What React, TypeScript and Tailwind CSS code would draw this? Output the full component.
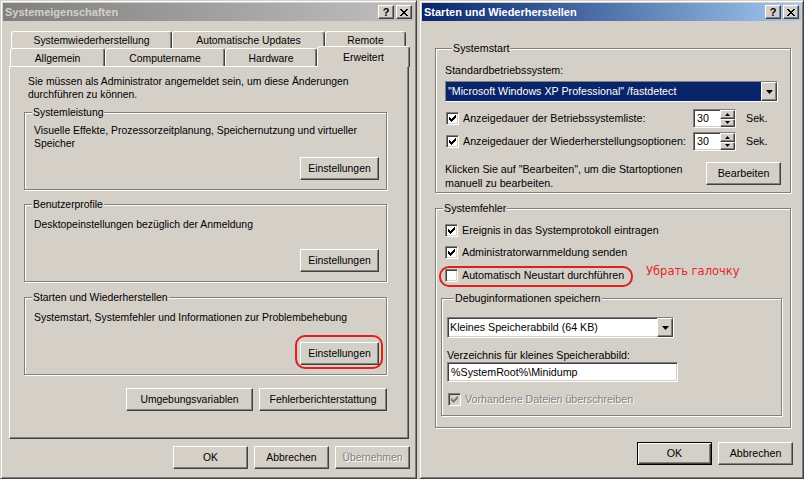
import type { ReactNode } from "react"

// classic 3D edges
const raised =
  "border border-t-white border-l-white border-r-[#404040] border-b-[#404040] shadow-[inset_-1px_-1px_0_#808080]"
const defRaised =
  "border border-black shadow-[inset_1px_1px_0_#fff,inset_-1px_-1px_0_#404040,inset_-2px_-2px_0_#808080]"
const sunken =
  "border border-t-[#808080] border-l-[#808080] border-r-white border-b-white shadow-[inset_1px_1px_0_#404040,inset_-1px_-1px_0_#d4d0c8]"
const etched = "border border-[#808080] shadow-[inset_1px_1px_0_#fff,1px_1px_0_#fff]"
const frame =
  "border border-t-[#d4d0c8] border-l-[#d4d0c8] border-r-[#404040] border-b-[#404040] shadow-[inset_1px_1px_0_#fff,inset_-1px_-1px_0_#808080] p-[2px]"
const grayed = "text-[#808080] [text-shadow:1px_1px_0_#fff]"

const CloseGlyph = () => (
  <svg width="8" height="7" viewBox="0 0 8 7" shapeRendering="crispEdges" fill="#000">
    <rect x="0" y="0" width="2" height="1" />
    <rect x="6" y="0" width="2" height="1" />
    <rect x="1" y="1" width="2" height="1" />
    <rect x="5" y="1" width="2" height="1" />
    <rect x="2" y="2" width="4" height="1" />
    <rect x="3" y="3" width="2" height="1" />
    <rect x="2" y="4" width="4" height="1" />
    <rect x="1" y="5" width="2" height="1" />
    <rect x="5" y="5" width="2" height="1" />
    <rect x="0" y="6" width="2" height="1" />
    <rect x="6" y="6" width="2" height="1" />
  </svg>
)

const TitleButton = ({ children }: { children: ReactNode }) => (
  <div
    className={`w-[16px] h-[14px] flex items-center justify-center bg-[#d4d0c8] text-black font-bold text-[11px] ${raised}`}
  >
    {children}
  </div>
)

const TitleBar = ({ title, active }: { title: string; active?: boolean }) => (
  <div
    className={`h-[18px] shrink-0 flex items-center px-[2px] text-[11px] ${
      active
        ? "bg-linear-to-r from-[#0a246a] to-[#a6caf0] text-white"
        : "bg-linear-to-r from-[#808080] to-[#c0c0c0] text-[#d4d0c8]"
    }`}
  >
    <span className="font-bold">{title}</span>
    <div className="ml-auto flex gap-[2px]">
      <TitleButton>?</TitleButton>
      <TitleButton>
        <CloseGlyph />
      </TitleButton>
    </div>
  </div>
)

const Btn = ({
  label,
  w = "w-[75px]",
  def,
  disabled,
}: {
  label: string
  w?: string
  def?: boolean
  disabled?: boolean
}) => (
  <div
    className={`${w} h-[23px] shrink-0 flex items-center justify-center bg-[#d4d0c8] ${def ? defRaised : raised} ${
      disabled ? grayed : ""
    }`}
  >
    {label}
  </div>
)

const CheckGlyph = ({ color }: { color: string }) => (
  <svg width="7" height="7" viewBox="0 0 7 7" shapeRendering="crispEdges" fill={color}>
    <rect x="0" y="2" width="1" height="3" />
    <rect x="1" y="3" width="1" height="3" />
    <rect x="2" y="4" width="1" height="3" />
    <rect x="3" y="3" width="1" height="3" />
    <rect x="4" y="2" width="1" height="3" />
    <rect x="5" y="1" width="1" height="3" />
    <rect x="6" y="0" width="1" height="3" />
  </svg>
)

const Check = ({ checked, disabled }: { checked?: boolean; disabled?: boolean }) => (
  <div
    className={`w-[13px] h-[13px] shrink-0 flex items-center justify-center ${sunken} ${
      disabled ? "bg-[#d4d0c8]" : "bg-white"
    }`}
  >
    {checked && <CheckGlyph color={disabled ? "#808080" : "#000"} />}
  </div>
)

const CheckRow = ({ label, checked }: { label: string; checked?: boolean }) => (
  <div className="flex items-center h-[13px] gap-[4px]">
    <Check checked={checked} />
    <span>{label}</span>
  </div>
)

const DropButton = () => (
  <div className={`w-[16px] h-full shrink-0 flex items-center justify-center bg-[#d4d0c8] ${raised}`}>
    <svg width="7" height="4" viewBox="0 0 7 4" fill="#000">
      <path d="M0 0h7L3.5 4z" />
    </svg>
  </div>
)

const SpinArrow = ({ up }: { up?: boolean }) => (
  <div className={`flex-1 flex items-center justify-center bg-[#d4d0c8] ${raised}`}>
    <svg width="5" height="3" viewBox="0 0 5 3" fill="#000">
      <path d={up ? "M0 3h5L2.5 0z" : "M0 0h5L2.5 3z"} />
    </svg>
  </div>
)

const Spin = () => (
  <div className={`w-[43px] h-[19px] shrink-0 flex bg-white ${sunken}`}>
    <span className="flex-1 pl-[3px] self-center">30</span>
    <div className="w-[15px] flex flex-col">
      <SpinArrow up />
      <SpinArrow />
    </div>
  </div>
)

const Group = ({ label, className, children }: { label: string; className: string; children?: ReactNode }) => (
  <div className={`flex flex-col shrink-0 ${etched} ${className}`}>
    <div className="-mt-[7px] ml-[7px] self-start px-[1px] bg-[#d4d0c8]">{label}</div>
    {children}
  </div>
)

const Tab = ({ label, w, selected, row2 }: { label: string; w: string; selected?: boolean; row2?: boolean }) => (
  <div
    className={`${w} shrink-0 flex items-center justify-center bg-[#d4d0c8] border-t border-l border-r border-t-white border-l-white border-r-[#404040] rounded-t-[3px] shadow-[inset_-1px_0_0_#808080] ${
      selected ? "h-[21px] -mb-[1px] relative z-10" : row2 ? "h-full pt-[2px]" : "h-full"
    }`}
  >
    {label}
  </div>
)

const SettingsGroup = ({ label, text, mt, circled }: { label: string; text: ReactNode; mt: string; circled?: boolean }) => (
  <Group label={label} className={`${mt} ml-[14px] w-[363px] h-[78px]`}>
    <div className={`ml-[9px] ${label === "Systemleistung" ? "mt-[5px]" : "mt-[7px]"}`}>{text}</div>
    <div className="mt-auto mb-[9px] mr-[7px] self-end relative">
      <Btn label="Einstellungen" w="w-[79px]" />
      {circled && (
        <div className="absolute -left-[5px] -right-[4px] -top-[7px] -bottom-[4px] border-2 border-[#e0201c] rounded-[10px]" />
      )}
    </div>
  </Group>
)

const SystemProperties = () => (
  <div className={`w-[417px] h-[479px] shrink-0 flex flex-col bg-[#d4d0c8] text-[10.4px] ${frame}`}>
    <TitleBar title="Systemeigenschaften" />
    <div className="mt-[10px] ml-[8px] flex h-[17px]">
      <Tab w="w-[161px]" label="Systemwiederherstellung" />
      <Tab w="w-[153px]" label="Automatische Updates" />
      <Tab w="w-[81px]" label="Remote" />
    </div>
    <div className="ml-[7px] flex items-end h-[18px]">
      <Tab w="w-[95px]" label="Allgemein" row2 />
      <Tab w="w-[120px]" label="Computername" row2 />
      <Tab w="w-[92px]" label="Hardware" row2 />
      <Tab w="w-[93px]" label="Erweitert" selected />
    </div>
    <div className="ml-[6px] w-[400px] h-[373px] shrink-0 flex flex-col border border-t-white border-l-white border-r-[#404040] border-b-[#404040] shadow-[inset_-1px_-1px_0_#808080]">
      <p className="mt-[8px] ml-[18px]">
        Sie müssen als Administrator angemeldet sein, um diese Änderungen
        <br />
        durchführen zu können.
      </p>
      <SettingsGroup
        label="Systemleistung"
        mt="mt-[11px]"
        text={
          <>
            Visuelle Effekte, Prozessorzeitplanung, Speichernutzung und virtueller
            <br />
            Speicher
          </>
        }
      />
      <SettingsGroup label="Benutzerprofile" mt="mt-[14px]" text="Desktopeinstellungen bezüglich der Anmeldung" />
      <SettingsGroup
        label="Starten und Wiederherstellen"
        mt="mt-[15px]"
        text="Systemstart, Systemfehler und Informationen zur Problembehebung"
        circled
      />
      <div className="mt-[13px] ml-[14px] w-[363px] flex justify-end gap-[6px]">
        <Btn label="Umgebungsvariablen" w="w-[127px]" />
        <Btn label="Fehlerberichterstattung" w="w-[128px]" />
      </div>
    </div>
    <div className="mt-[7px] mr-[4px] flex justify-end gap-[6px]">
      <Btn label="OK" />
      <Btn label="Abbrechen" />
      <Btn label="Übernehmen" disabled />
    </div>
  </div>
)

const StartupRecovery = () => (
  <div className={`w-[385px] h-[479px] shrink-0 flex flex-col bg-[#d4d0c8] text-[10.7px] ${frame}`}>
    <TitleBar title="Starten und Wiederherstellen" active />

    <Group label="Systemstart" className="mt-[27px] ml-[13px] w-[356px] h-[145px] pl-[9px] pr-[9px]">
      <div className="mt-[9px]">Standardbetriebssystem:</div>
      <div className={`mt-[4px] w-[333px] h-[21px] flex bg-white ${sunken}`}>
        <div className="flex-1 flex items-center pl-[2px] bg-[#0a246a] text-white">
          "Microsoft Windows XP Professional" /fastdetect
        </div>
        <DropButton />
      </div>
      <div className="mt-[7px] flex items-center h-[19px]">
        <div className="ml-[1px]">
          <Check checked />
        </div>
        <span className="ml-[4px] w-[230px]">Anzeigedauer der Betriebssystemliste:</span>
        <Spin />
        <span className="ml-[10px]">Sek.</span>
      </div>
      <div className="mt-[4px] flex items-center h-[19px]">
        <div className="ml-[1px]">
          <Check checked />
        </div>
        <span className="ml-[4px] w-[230px]">Anzeigedauer der Wiederherstellungsoptionen:</span>
        <Spin />
        <span className="ml-[10px]">Sek.</span>
      </div>
      <div className="mt-[11px] flex justify-between items-start">
        <p className="leading-[14px]">
          Klicken Sie auf "Bearbeiten", um die Startoptionen
          <br />
          manuell zu bearbeiten.
        </p>
        <Btn label="Bearbeiten" />
      </div>
    </Group>

    <Group label="Systemfehler" className="mt-[15px] ml-[13px] w-[356px] h-[220px]">
      <div className="mt-[9px] ml-[9px]">
        <CheckRow label="Ereignis in das Systemprotokoll eintragen" checked />
      </div>
      <div className="mt-[9px] ml-[9px]">
        <CheckRow label="Administratorwarnmeldung senden" checked />
      </div>
      <div className="mt-[10px] ml-[9px] relative">
        <CheckRow label="Automatisch Neustart durchführen" />
        <div className="absolute -left-[6px] -top-[3px] w-[194px] h-[21px] border-2 border-[#e0201c] rounded-[10px]" />
        <span className="absolute left-[201px] -top-[4px] whitespace-nowrap [font-family:'DejaVu_Sans',sans-serif] text-[11.5px] text-[#e4262b]">
          Убрать галочку
        </span>
      </div>

      <Group label="Debuginformationen speichern" className="mt-[16px] ml-[5px] w-[341px] h-[118px] pl-[5px]">
        <div className={`mt-[12px] w-[227px] h-[21px] flex bg-white ${sunken}`}>
          <div className="flex-1 flex items-center pl-[2px]">Kleines Speicherabbild (64 KB)</div>
          <DropButton />
        </div>
        <div className="mt-[11px]">Verzeichnis für kleines Speicherabbild:</div>
        <div className={`w-[231px] h-[20px] flex items-center pl-[3px] bg-white ${sunken}`}>
          %SystemRoot%\Minidump
        </div>
        <div className="mt-[11px] ml-[1px] flex items-center h-[13px] gap-[4px]">
          <Check checked disabled />
          <span className={grayed}>Vorhandene Dateien überschreiben</span>
        </div>
      </Group>
    </Group>

    <div className="mt-[14px] mr-[8px] flex justify-end gap-[6px]">
      <Btn label="OK" def />
      <Btn label="Abbrechen" />
    </div>
  </div>
)

export default function App() {
  return (
    <div className="w-[804px] h-[479px] flex gap-[2px] bg-[#d4d0c8] overflow-hidden [font-family:'Liberation_Sans',Arial,sans-serif] text-[11px] leading-[13px] text-black">
      <SystemProperties />
      <StartupRecovery />
    </div>
  )
}
